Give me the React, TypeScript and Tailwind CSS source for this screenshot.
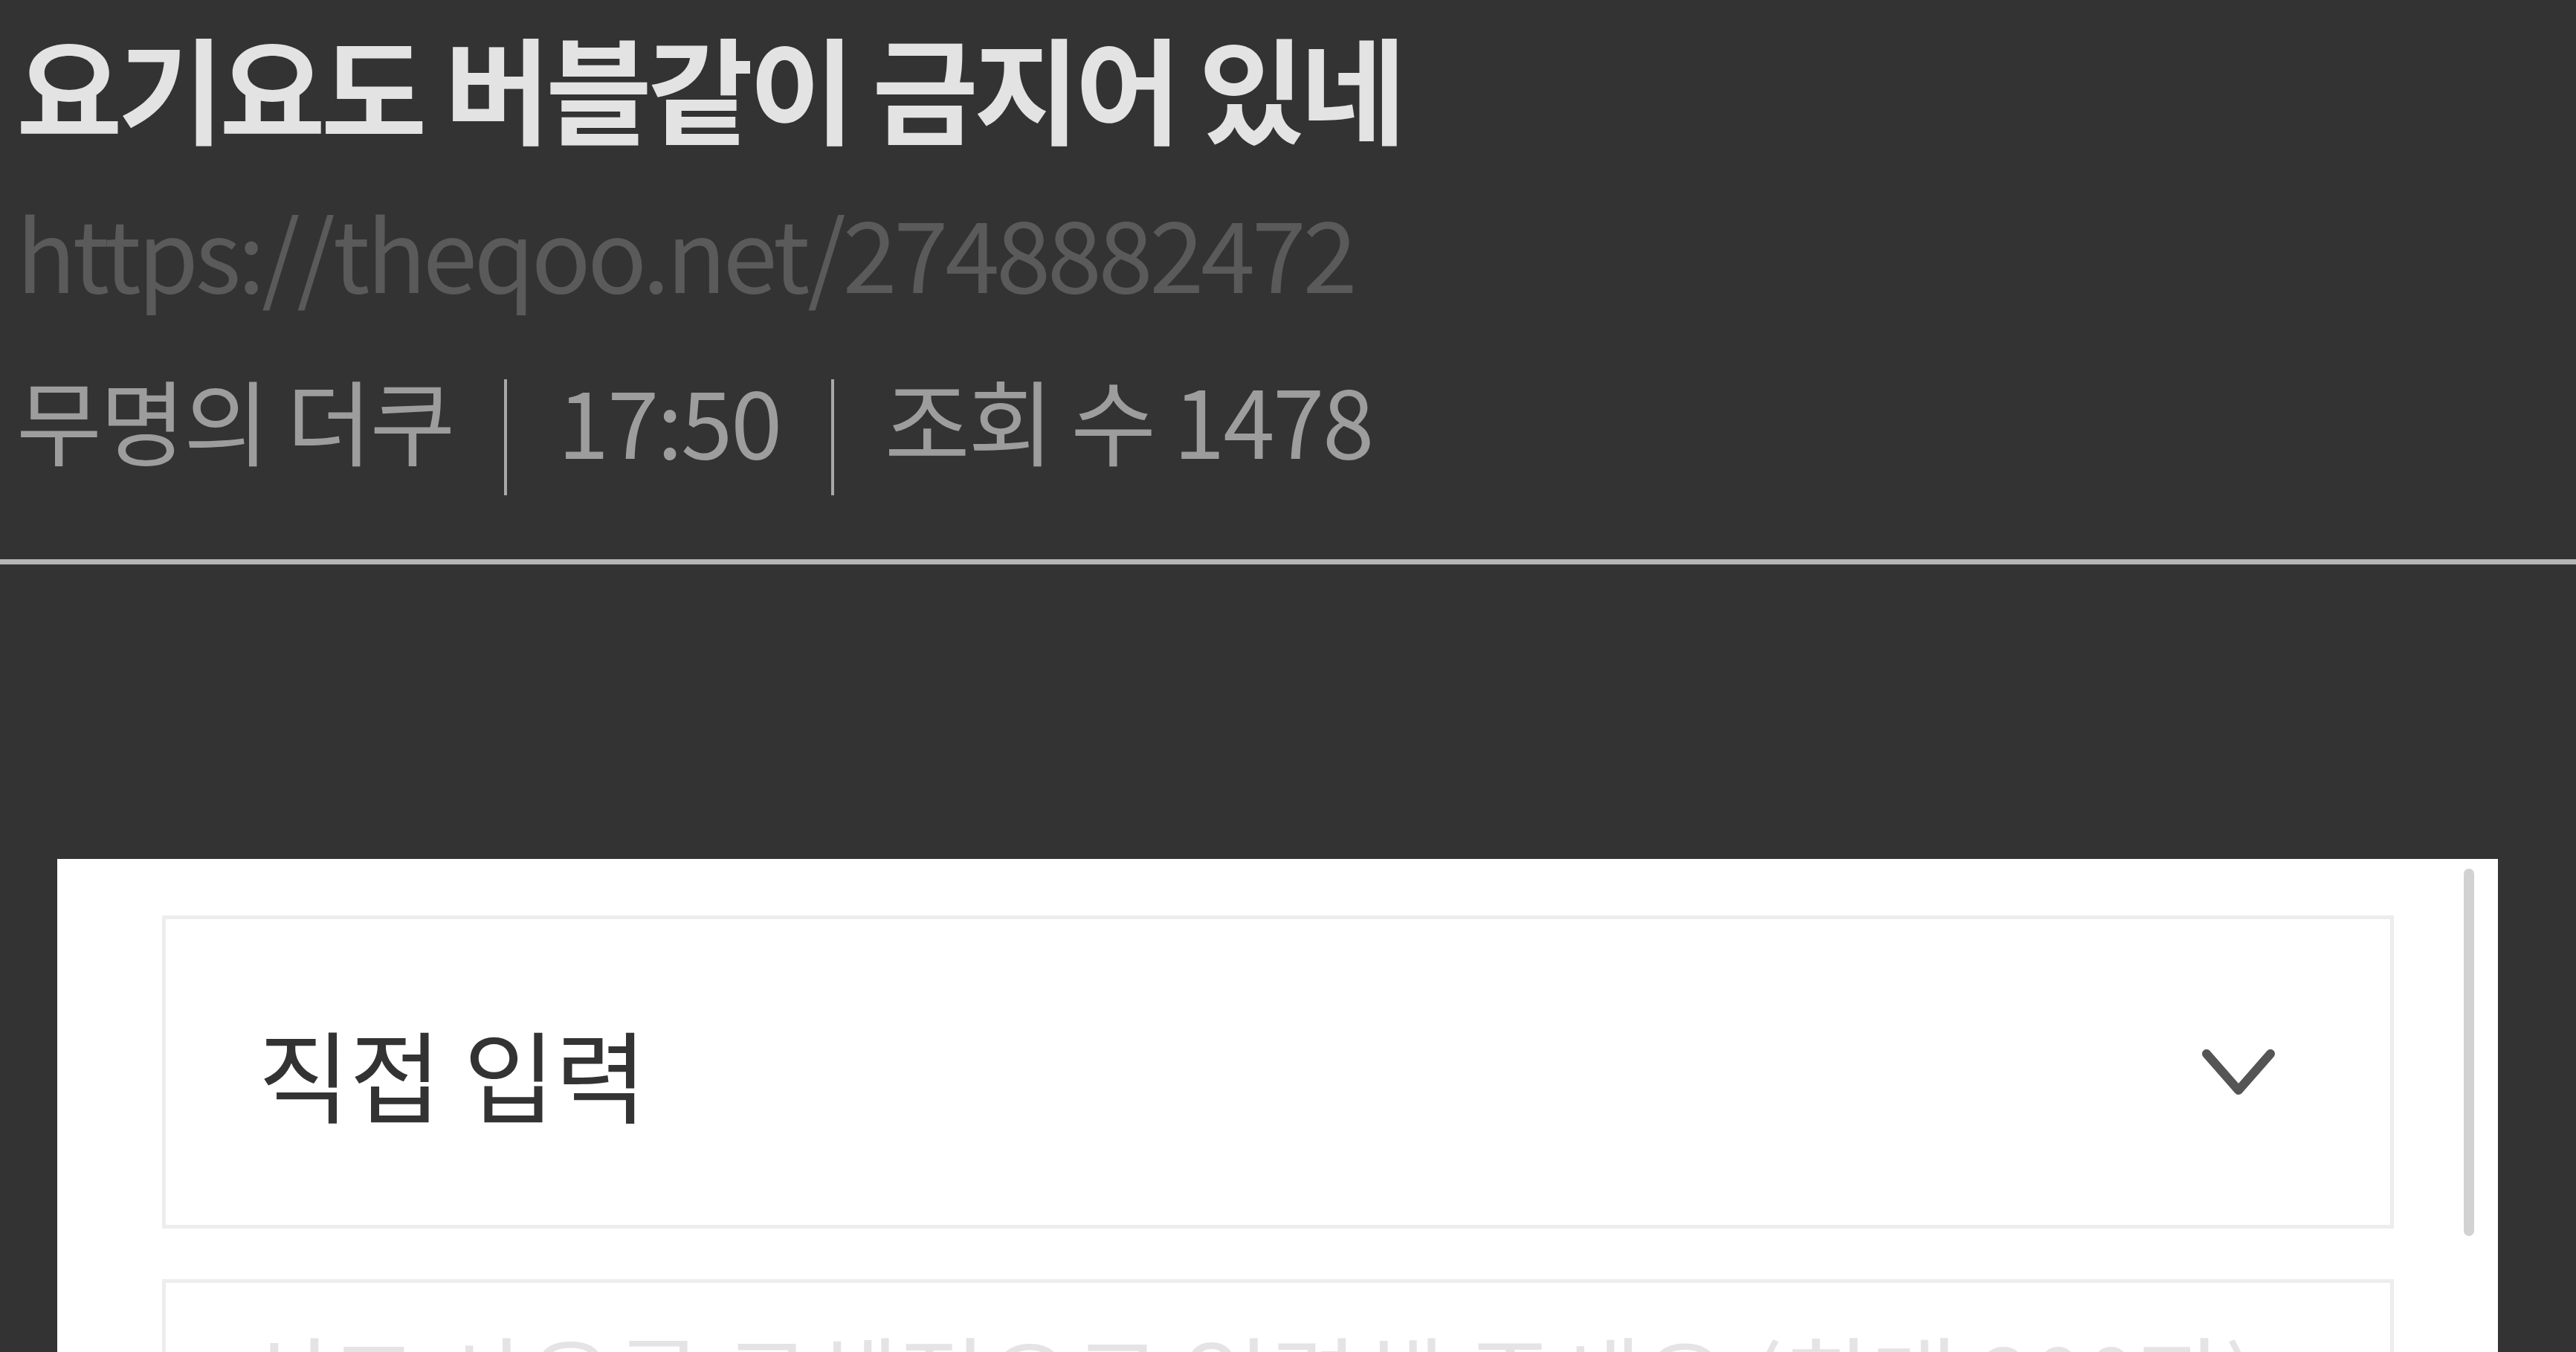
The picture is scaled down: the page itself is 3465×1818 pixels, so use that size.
import { ReactNode } from 'react';

const meta = ['무명의 더쿠', '17:50', '조회 수 1478'];

function Pipe() {
  return <div className="w-[4px] h-[156px] mt-[10px] bg-[#a8a8a8]" />;
}

function Chevron() {
  return (
    <svg width="100" height="68" viewBox="0 0 100 68" fill="none">
      <polyline
        points="7,9 50,58 93,9"
        stroke="#555555"
        strokeWidth="12"
        strokeLinecap="round"
        strokeLinejoin="round"
      />
    </svg>
  );
}

function Field({ children, className }: { children: ReactNode; className?: string }) {
  return (
    <div className={'w-[3002px] border-[5px] border-[#ededed] bg-white ' + (className ?? '')}>
      {children}
    </div>
  );
}

export default function App() {
  return (
    <div className="w-[3465px] h-[1818px] overflow-hidden bg-[#333333] font-['Noto_Sans_CJK_KR','Noto_Sans',sans-serif]">
      {/* Post header */}
      <header className="pl-[22px] pt-[37px]">
        <h1 className="text-[155px] leading-none font-bold tracking-[-6px] text-[#e3e3e3] whitespace-nowrap">
          요기요도 버블같이 금지어 있네
        </h1>
        <p className="mt-[79px] text-[132px] leading-none tracking-[-4.5px] text-[#5a5a5a] whitespace-nowrap">
          https://theqoo.net/2748882472
        </p>
        <div className="mt-[97px] flex items-start gap-[68px] text-[125px] leading-none tracking-[-2.5px] text-[#9d9d9d] whitespace-nowrap">
          <span>{meta[0]}</span>
          <Pipe />
          <span>{meta[1]}</span>
          <Pipe />
          <span>{meta[2]}</span>
        </div>
      </header>

      <div className="mt-[86px] h-[7px] bg-[#b6b6b6]" />

      {/* Report sheet */}
      <div className="relative mt-[396px] ml-[77px] w-[3283px] h-[700px] bg-white pl-[141px] pt-[76px]">
        <Field className="h-[421px] flex items-center justify-between pl-[124px] pr-[154px]">
          <span className="text-[134px] leading-none text-[#333333]">직접 입력</span>
          <Chevron />
        </Field>
        <Field className="mt-[68px] h-[400px] pl-[104px] pt-[62px]">
          <p className="text-[128px] leading-none text-[#e4e4e4] whitespace-nowrap">
            신고 사유를 구체적으로 입력해 주세요 (최대 200자)
          </p>
        </Field>
        {/* overlay scrollbar */}
        <div className="absolute right-[32px] top-[13px] w-[14px] h-[494px] rounded-full bg-[#d2d2d2]" />
      </div>
    </div>
  );
}
